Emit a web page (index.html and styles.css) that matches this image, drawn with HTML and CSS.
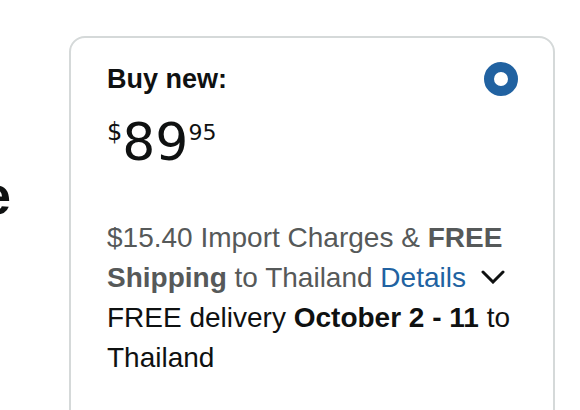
FILE: index.html
```html
<!DOCTYPE html>
<html lang="en">
<head>
<meta charset="utf-8">
<title>Buy box</title>
<link rel="stylesheet" href="styles.css">
</head>
<body>
<div class="page">
  <div class="title-col"><span class="title">Bookshelf Storage</span></div>
  <section class="buybox">
    <div class="head">
      <span class="label">Buy new:</span>
      <span class="radio"></span>
    </div>
    <div class="price">
      <span class="sym">$</span><span class="whole">89</span><span class="frac">95</span>
    </div>
    <p class="import">$15.40 Import Charges &amp; <b class="strong-gray">FREE Shipping</b> to Thailand <a class="details" href="#">Details</a><svg class="chev" width="24" height="14" viewBox="0 0 24 14" aria-hidden="true"><polyline points="2,2 12,12 22,2" fill="none" stroke="#0f1111" stroke-width="3" stroke-linecap="round" stroke-linejoin="miter"/></svg></p>
    <p class="delivery">FREE delivery <b>October 2 - 11</b> to Thailand</p>
    <p class="fastest">Or fastest delivery <b>Tomorrow, September 28</b></p>
  </section>
</div>
</body>
</html>
```

FILE: styles.css
```css
body {
  margin: 0;
  background: #ffffff;
  font-family: "Liberation Sans", Arial, sans-serif;
  color: #0f1111;
}

.page {
  display: flex;
  padding-top: 36px;
  height: 410px;
  box-sizing: border-box;
  overflow: hidden;
}

.title-col {
  flex: none;
  width: 11px;
  overflow: hidden;
  display: flex;
  justify-content: flex-end;
  align-items: flex-start;
  padding-top: 132px;
}

.title {
  flex: none;
  font-size: 54px;
  font-weight: 700;
  line-height: 1;
  white-space: nowrap;
}

.buybox {
  flex: none;
  width: 486px;
  min-height: 500px;
  margin-left: 58px;
  border: 2px solid #d5d9d9;
  border-radius: 16px;
  padding: 21px 35px 40px 36px;
  box-sizing: border-box;
  font-size: 28px;
  line-height: 40px;
}

.head {
  display: flex;
  justify-content: space-between;
  align-items: center;
}

.label {
  font-weight: 700;
  font-size: 27px;
}

.radio {
  width: 34px;
  height: 34px;
  box-sizing: border-box;
  border: 10px solid #2162a1;
  border-radius: 50%;
  background: #ffffff;
}

.price {
  display: flex;
  align-items: flex-start;
  margin-top: 17px;
  font-family: "DejaVu Sans", sans-serif;
  line-height: 1;
}

.sym {
  font-size: 24px;
  margin-top: 4px;
}

.frac {
  font-size: 22px;
  margin-top: 6px;
}

.whole {
  font-size: 52px;
}

.import {
  margin: 50px 0 0;
  color: #565959;
}

.strong-gray {
  color: #565959;
}

.details {
  color: #2162a1;
  text-decoration: none;
}

.chev {
  margin-left: 15px;
  vertical-align: 3px;
}

.delivery {
  margin: 0;
}

.fastest {
  margin: 24px 0 0;
}
```
